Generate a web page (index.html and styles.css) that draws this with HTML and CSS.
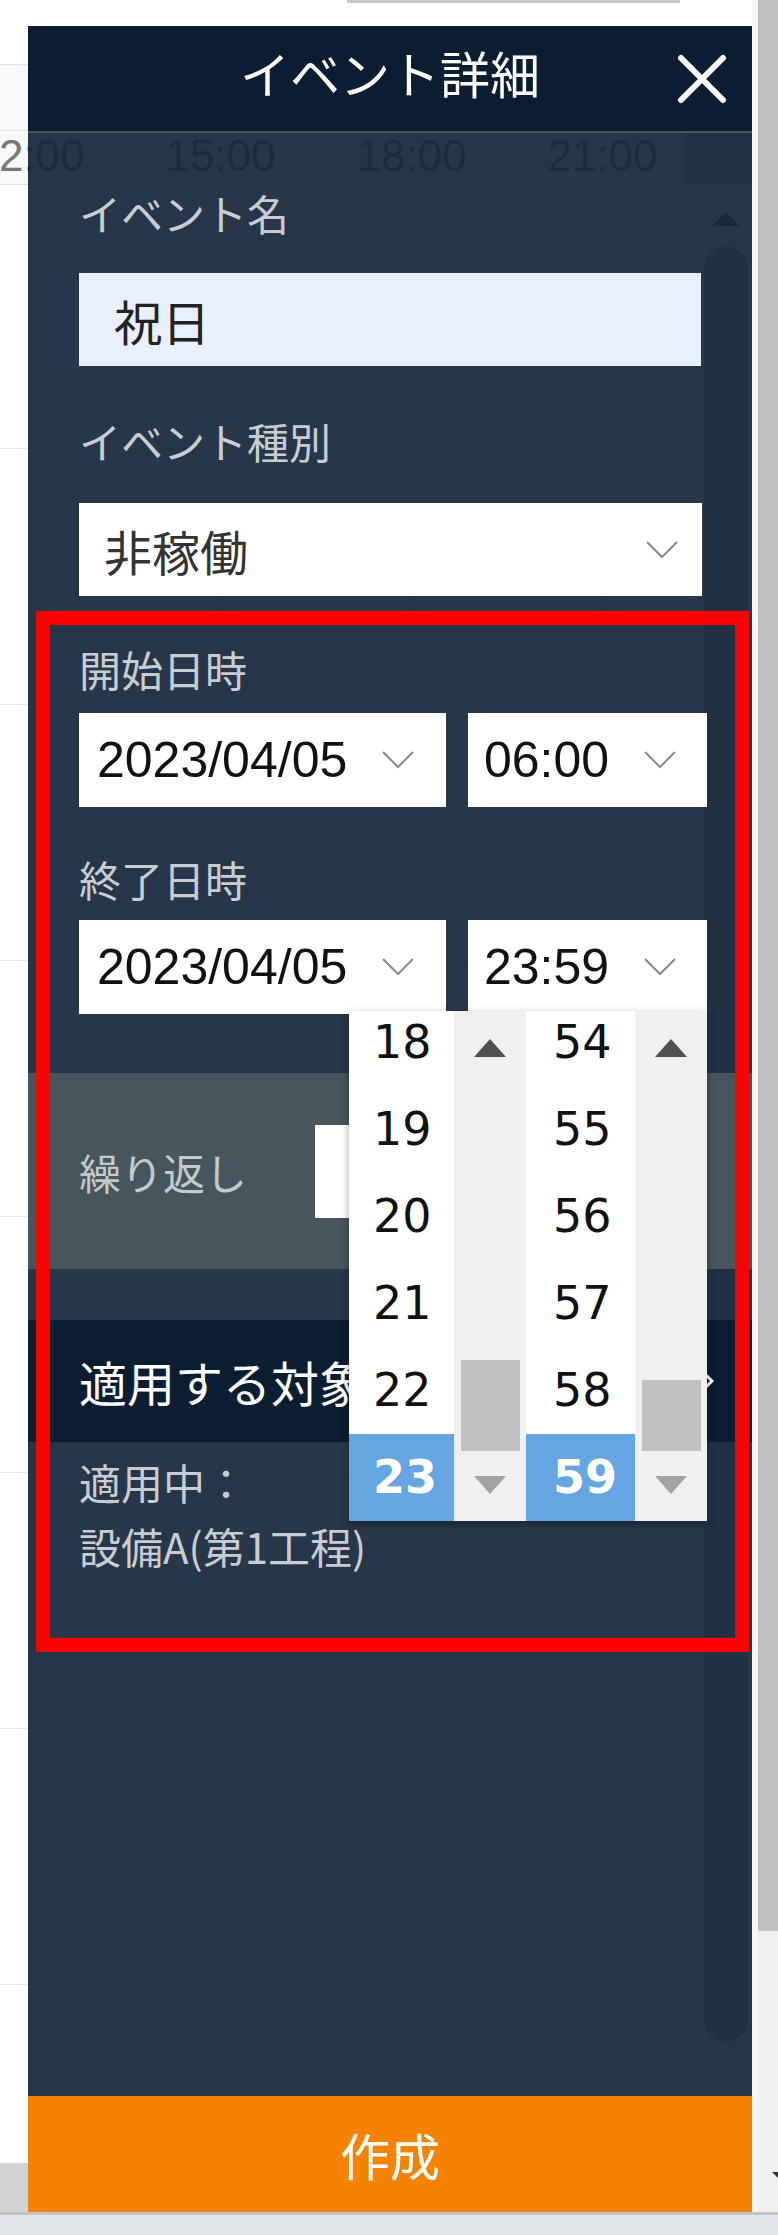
FILE: index.html
```html
<!DOCTYPE html>
<html lang="ja">
<head>
    <meta charset="UTF-8">
    <meta name="viewport" content="width=device-width, initial-scale=1.0">
    <title>イベント詳細</title>
    <link rel="stylesheet" href="styles.css">
</head>
<body>

<!-- calendar behind the drawer -->
<div class="page">
  <div class="calendar">
    <div class="cal-top"><div class="search-edge"></div></div>
    <div class="cal-date"></div>
    <div class="cal-times">
      <div class="ticks">
        <span>12:00</span><span>15:00</span><span>18:00</span><span>21:00</span>
      </div>
      <div class="corner"></div>
    </div>
    <div class="cal-main">
      <div class="cal-rows">
        <div class="row first"></div>
        <div class="row"></div>
        <div class="row"></div>
        <div class="row"></div>
        <div class="row"></div>
        <div class="row"></div>
        <div class="row"></div>
        <div class="row"></div>
      </div>
      <div class="cal-vbar">
        <span class="up"></span>
        <div class="thumb"></div>
      </div>
    </div>
    <div class="cal-hbar"></div>
  </div>
  <div class="gutter"></div>
  <div class="vscroll">
    <div class="vthumb"></div>
    <div class="vtrack"><span class="down"></span></div>
  </div>
</div>
<div class="statusbar"></div>

<!-- event drawer -->
<aside class="drawer">
  <header class="drawer-head">
    <h1>イベント詳細</h1>
    <button class="close">
      <svg width="52" height="52" viewBox="0 0 52 52"><path d="M5 5 L47 47 M47 5 L5 47" stroke="#fff" stroke-width="6" stroke-linecap="round" fill="none"/></svg>
    </button>
  </header>

  <div class="drawer-body">
    <label class="label l-name">イベント名</label>
    <div class="field name">祝日</div>

    <label class="label l-kind">イベント種別</label>
    <div class="field select kind">
      <span>非稼働</span>
      <svg class="chev" width="32" height="18" viewBox="0 0 32 18"><polyline points="1,1 16,16 31,1" fill="none" stroke="#8a8a8a" stroke-width="2"/></svg>
    </div>

    <label class="label l-start">開始日時</label>
    <div class="pair p-start">
      <div class="field select date">
        <span>2023/04/05</span>
        <svg class="chev" width="32" height="18" viewBox="0 0 32 18"><polyline points="1,1 16,16 31,1" fill="none" stroke="#8a8a8a" stroke-width="2"/></svg>
      </div>
      <div class="field select time">
        <span>06:00</span>
        <svg class="chev" width="32" height="18" viewBox="0 0 32 18"><polyline points="1,1 16,16 31,1" fill="none" stroke="#8a8a8a" stroke-width="2"/></svg>
      </div>
    </div>

    <label class="label l-end">終了日時</label>
    <div class="pair p-end">
      <div class="field select date">
        <span>2023/04/05</span>
        <svg class="chev" width="32" height="18" viewBox="0 0 32 18"><polyline points="1,1 16,16 31,1" fill="none" stroke="#8a8a8a" stroke-width="2"/></svg>
      </div>
      <div class="field select time">
        <span>23:59</span>
        <svg class="chev" width="32" height="18" viewBox="0 0 32 18"><polyline points="1,1 16,16 31,1" fill="none" stroke="#8a8a8a" stroke-width="2"/></svg>
      </div>
    </div>

    <div class="repeat">
      <span>繰り返し</span>
      <div class="repeat-box">しない</div>
    </div>

    <div class="target">
      <span>適用する対象設備</span>
      <svg width="14" height="24" viewBox="0 0 14 24"><polyline points="2,2 12,12 2,22" fill="none" stroke="#fff" stroke-width="3"/></svg>
    </div>

    <p class="applied">適用中：<br>設備A(第1工程)</p>
  </div>

  <button class="create">作成</button>
</aside>

<!-- time picker dropdown -->
<div class="picker">
  <div class="col hour">
    <div class="list">
      <ul>
        <li>18</li><li>19</li><li>20</li><li>21</li><li>22</li><li class="on">23</li>
      </ul>
    </div>
    <div class="track"><span class="up"></span><div class="thumb"></div><span class="down"></span></div>
  </div>
  <div class="col min">
    <div class="list">
      <ul>
        <li>54</li><li>55</li><li>56</li><li>57</li><li>58</li><li class="on">59</li>
      </ul>
    </div>
    <div class="track"><span class="up"></span><div class="thumb"></div><span class="down"></span></div>
  </div>
</div>

<div class="mark"></div>

</body>
</html>
```

FILE: styles.css
```css
*{
  margin: 0;
  padding: 0;
  box-sizing: border-box;
}

body{
  width: 778px;
  height: 2235px;
  overflow: hidden;
  position: relative;
  background: #fff;
  font-family: "Noto Sans CJK JP", "Noto Sans", sans-serif;
}

/* ---------- calendar (behind) ---------- */
.page{
  display: flex;
  height: 2212px;
}
.calendar{
  width: 752px;
  display: flex;
  flex-direction: column;
  background: #fff;
  overflow: hidden;
}
.cal-top{
  flex-shrink: 0;
  height: 64px;
}
.search-edge{
  margin-left: 347px;
  width: 333px;
  height: 3px;
  background: #c6c6c6;
}
.cal-date{
  flex-shrink: 0;
  height: 66px;
  background: #f7f8fa;
  border-top: 1px solid #e2e5e9;
}
.cal-times{
  flex-shrink: 0;
  height: 55px;
  display: flex;
  background: #f7f8fa;
  border-top: 1px solid #e2e5e9;
  border-bottom: 1px solid #dde1e5;
}
.ticks{
  flex: 1;
  display: flex;
  margin-left: -66px;
  overflow: hidden;
}
.ticks span{
  flex: 0 0 191px;
  text-align: center;
  font-family: "Liberation Sans", sans-serif;
  font-size: 44px;
  line-height: 50px;
  color: #777;
}
.corner{
  width: 67px;
  background: #c4c4c4;
}
.cal-main{
  flex: 1;
  min-height: 0;
  overflow: hidden;
  display: flex;
}
.cal-rows{
  flex: 1;
  background-image: linear-gradient(to right, #e9ecef 1px, transparent 1px);
  background-size: 191px 100%;
  background-position: 29px 0;
}
.row{
  height: 256px;
  border-bottom: 1px solid #e3e6ea;
}
.row.first{
  height: 264px;
}
.cal-vbar{
  width: 52px;
  display: flex;
  flex-direction: column;
  align-items: center;
}
.cal-vbar .up{
  margin-top: 27px;
  border-left: 14px solid transparent;
  border-right: 14px solid transparent;
  border-bottom: 14px solid #555;
}
.cal-vbar .thumb{
  flex-shrink: 0;
  margin-top: 20px;
  width: 44px;
  height: 1796px;
  border-radius: 22px;
  background: #b2b2b2;
}
.cal-hbar{
  flex-shrink: 0;
  height: 49px;
  background: #d3d3d3;
}
.gutter{
  width: 6px;
  background: #f6f6f6;
}
.vscroll{
  width: 20px;
  display: flex;
  flex-direction: column;
}
.vthumb{
  flex-shrink: 0;
  height: 1931px;
  background: #c1c1c1;
}
.vtrack{
  flex: 1;
  background: #f0f0f0;
  display: flex;
  justify-content: flex-end;
  align-items: flex-end;
  padding-bottom: 34px;
}
.vtrack .down{
  border-left: 6px solid transparent;
  border-top: 6px solid #333;
}
.statusbar{
  height: 23px;
  background: #e4e7ea;
  border-top: 3px solid #c0c4c8;
}

/* ---------- drawer ---------- */
.drawer{
  position: absolute;
  left: 28px;
  top: 26px;
  width: 724px;
  height: 2186px;
  display: flex;
  flex-direction: column;
}
.drawer-head{
  flex-shrink: 0;
  height: 107px;
  background: #0b1d30;
  border-bottom: 2px solid #44535f;
  display: grid;
  grid-template-columns: 1fr auto 1fr;
  align-items: center;
}
.drawer-head h1{
  grid-column: 2;
  font-size: 50px;
  font-weight: 400;
  line-height: 1;
  color: #fff;
  margin-bottom: 14px;
}
.close{
  justify-self: end;
  margin-right: 24px;
  width: 52px;
  height: 52px;
  border: none;
  background: none;
  display: flex;
}
.drawer-body{
  flex: 1;
  display: flex;
  flex-direction: column;
  background: rgba(21, 38, 57, 0.92);
}

.label{
  display: block;
  margin-left: 51px;
  font-size: 42px;
  line-height: 50px;
  color: #c9cdd2;
}
.l-name{ margin-top: 55px; }
.l-kind{ margin-top: 50px; }
.l-start{ margin-top: 48px; }
.l-end{ margin-top: 47px; }

.field{
  flex-shrink: 0;
  margin-left: 51px;
  height: 93px;
  display: flex;
  align-items: center;
  background: #fff;
  font-size: 48px;
  color: #333;
}
.select{
  justify-content: space-between;
}
.name{
  margin-top: 35px;
  width: 622px;
  padding-left: 35px;
  background: #e8f0fe;
  color: #222;
}
.kind{
  margin-top: 37px;
  width: 623px;
  padding: 0 24px 0 25px;
}

.pair{
  margin-left: 51px;
  display: flex;
  gap: 22px;
}
.p-start{ margin-top: 19px; }
.p-end{ margin-top: 16px; }
.pair .field{
  margin-left: 0;
  height: 94px;
  font-family: "Liberation Sans", sans-serif;
  font-size: 50px;
  color: #111;
}
.date{
  width: 367px;
  padding: 0 32px 0 18px;
}
.time{
  width: 239px;
  padding: 0 31px 0 16px;
}

.repeat{
  flex-shrink: 0;
  margin-top: 59px;
  height: 196px;
  display: flex;
  align-items: center;
  padding-left: 51px;
  background: #47555d;
}
.repeat span{
  width: 236px;
  font-size: 42px;
  color: #c4c9cc;
}
.repeat-box{
  width: 386px;
  height: 93px;
  display: flex;
  align-items: center;
  padding-left: 25px;
  background: #fff;
  font-size: 46px;
  color: #333;
}

.target{
  flex-shrink: 0;
  margin-top: 51px;
  height: 122px;
  display: flex;
  align-items: center;
  justify-content: space-between;
  padding: 0 38px 0 51px;
  background: #0b1d30;
  font-size: 48px;
  color: #fff;
}

.applied{
  margin: 8px 0 0 51px;
  font-size: 42px;
  line-height: 64px;
  color: #c9cdd2;
}

.create{
  flex-shrink: 0;
  height: 116px;
  border: none;
  background: #f58300;
  color: #fff;
  font-family: inherit;
  font-size: 50px;
}

/* ---------- time picker ---------- */
.picker{
  position: absolute;
  left: 349px;
  top: 1011px;
  width: 358px;
  height: 510px;
  display: flex;
  background: #fff;
  box-shadow: 0 3px 8px rgba(0, 0, 0, 0.35);
  z-index: 2;
}
.col{
  display: flex;
}
.list{
  width: 105px;
  overflow: hidden;
}
.min .list{
  width: 109px;
}
.list ul{
  list-style: none;
  margin-top: -12px;
}
.list li{
  height: 87px;
  line-height: 87px;
  padding-left: 24px;
  font-family: "DejaVu Sans", sans-serif;
  font-size: 46px;
  color: #111;
}
.min .list li{
  padding-left: 27px;
}
.list li.on{
  background: #65a5e1;
  color: #fff;
  font-weight: 700;
}
.track{
  width: 72px;
  display: flex;
  flex-direction: column;
  align-items: center;
  background: #f0f0f0;
}
.track .up{
  margin-top: 28px;
  border-left: 16px solid transparent;
  border-right: 16px solid transparent;
  border-bottom: 18px solid #505050;
}
.track .thumb{
  margin-top: auto;
  width: 59px;
  height: 91px;
  background: #c1c1c1;
}
.min .track .thumb{
  height: 71px;
}
.track .down{
  margin: 25px 0 27px;
  border-left: 16px solid transparent;
  border-right: 16px solid transparent;
  border-top: 18px solid #a3a3a3;
}

/* red highlight drawn over the screenshot */
.mark{
  position: absolute;
  left: 36px;
  top: 611px;
  width: 713px;
  height: 1041px;
  border: 14px solid #ff0000;
  z-index: 3;
  pointer-events: none;
}
```
